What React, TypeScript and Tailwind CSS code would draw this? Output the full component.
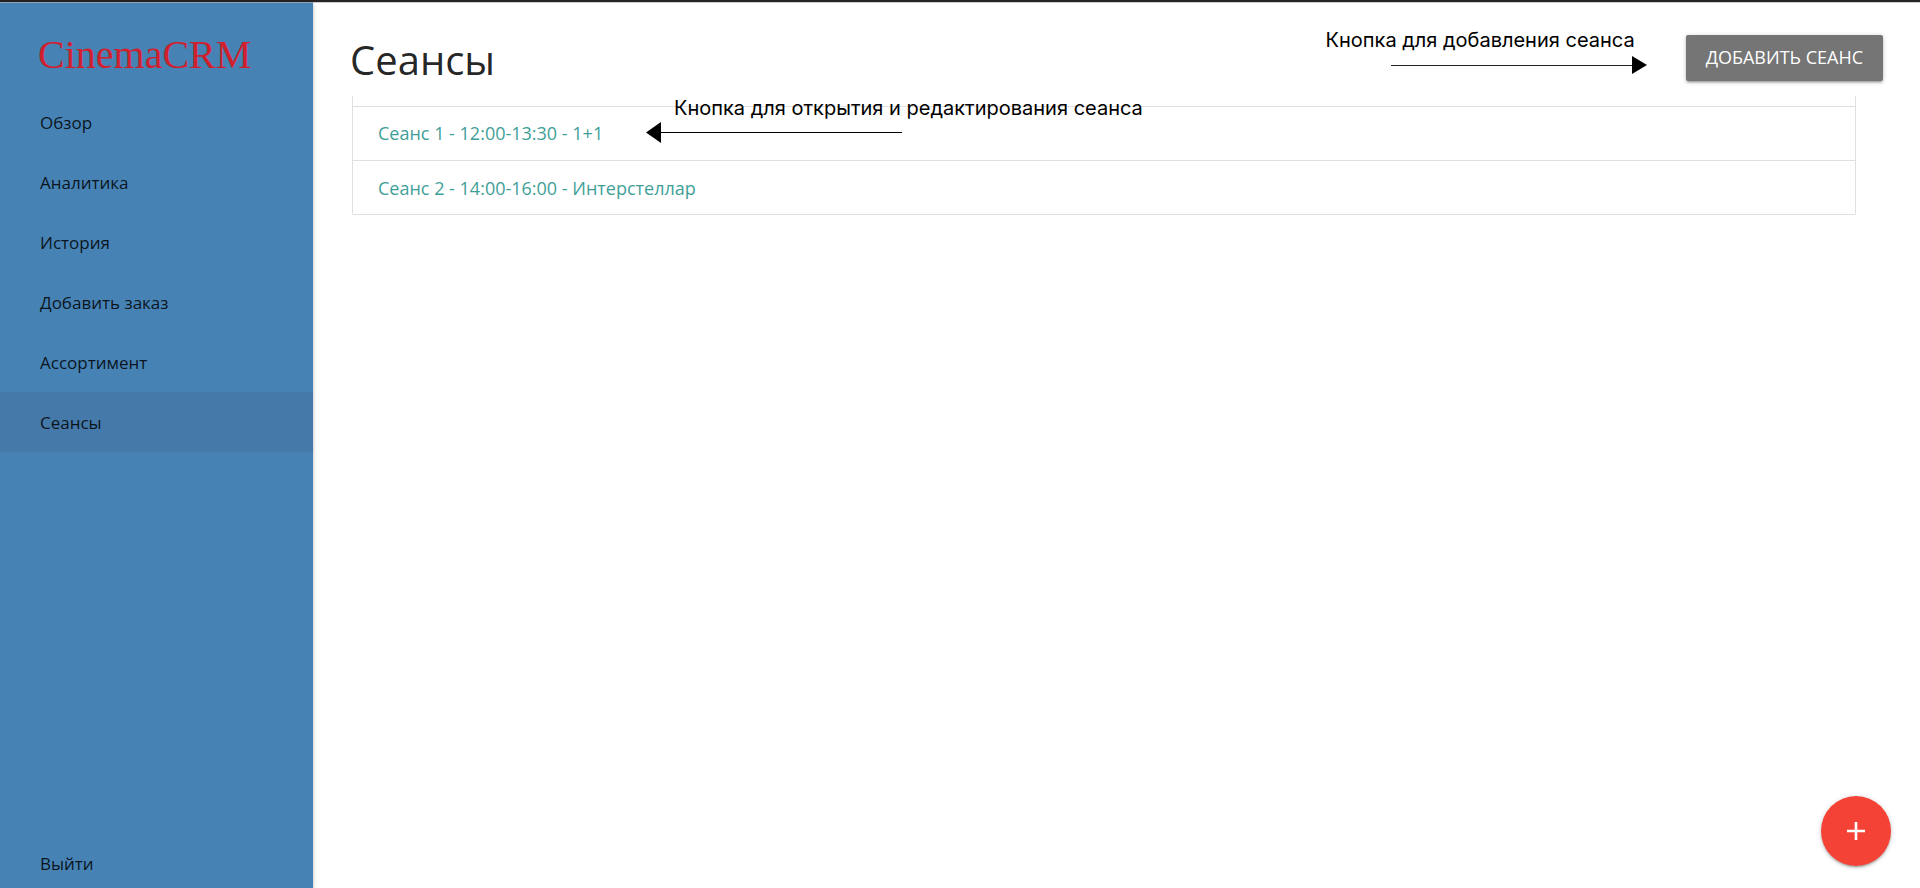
const navItems = [
  { label: 'Обзор', active: false },
  { label: 'Аналитика', active: false },
  { label: 'История', active: false },
  { label: 'Добавить заказ', active: false },
  { label: 'Ассортимент', active: false },
  { label: 'Сеансы', active: true },
];

function Sidebar() {
  return (
    <aside className="z-10 flex w-[313px] shrink-0 flex-col border-t border-[#8fa3b3] bg-[#4682b4] shadow-[0_2px_2px_0_rgba(0,0,0,0.14),0_3px_1px_-2px_rgba(0,0,0,0.12),0_1px_5px_0_rgba(0,0,0,0.2)]">
      <a href="#" className="flex h-[89px] items-center px-[38px] pt-[14px] font-['Liberation_Serif',serif] text-[40px] leading-none text-[#d0202e]">
        CinemaCRM
      </a>
      <nav className="flex grow flex-col text-[17px] font-medium text-black/85">
        {navItems.map((item) => (
          <a
            key={item.label}
            href="#"
            aria-current={item.active ? 'page' : undefined}
            className={`flex h-[60px] items-center px-10 pt-[2px] ${item.active ? 'bg-[#4479aa]' : ''}`}
          >
            {item.label}
          </a>
        ))}
        <a href="#" className="mt-auto flex h-12 items-center px-10">
          Выйти
        </a>
      </nav>
    </aside>
  );
}

function AddHint() {
  return (
    <div className="mr-[39px] flex flex-col items-end pt-[2px] font-['Inter',sans-serif] text-[20px] leading-6 text-black">
      <span className="mr-3">Кнопка для добавления сеанса</span>
      <svg className="mt-1 h-[18px] w-[256px]" viewBox="0 0 256 18" aria-hidden="true">
        <path d="M0 9.5H243" stroke="#222" strokeWidth="1" />
        <path d="M241 0L256 9L241 18Z" />
      </svg>
    </div>
  );
}

function EditHint() {
  return (
    <div className="absolute -top-[11px] left-[293px] font-['Inter',sans-serif] text-[20px] leading-6 text-black">
      <span className="ml-7 block whitespace-nowrap">Кнопка для открытия и редактирования сеанса</span>
      <svg className="mt-[2px] h-[22px] w-[256px]" viewBox="0 0 256 22" aria-hidden="true">
        <path d="M14 10.5H256" stroke="#000" strokeWidth="1" />
        <path d="M0 10.5L15 0V21Z" />
      </svg>
    </div>
  );
}

export default function App() {
  return (
    <div className="flex min-h-screen border-t-2 border-[#252323] bg-white font-['Open_Sans','Noto_Sans',sans-serif]">
      <Sidebar />
      <main className="flex min-w-0 grow flex-col border-t border-[#cccccc]">
        <header className="flex h-[93px] shrink-0 items-center pr-[37px] pl-[37px]">
          <h1 className="grow pt-5 text-[40px] leading-none text-black/87">Сеансы</h1>
          <AddHint />
          <button
            type="button"
            className="mt-4 h-[46px] rounded-[2px] bg-[#757575] px-5 text-[18px] text-white uppercase shadow-[0_2px_2px_0_rgba(0,0,0,0.14),0_3px_1px_-2px_rgba(0,0,0,0.12),0_1px_5px_0_rgba(0,0,0,0.2)]"
          >
            Добавить сеанс
          </button>
        </header>
        <ul className="mr-16 ml-[39px] rounded-b-[2px] border-x border-b border-[#e0e0e0] pt-[10px] text-[18px] text-[#3f9f98]">
          <li className="relative flex h-[54px] items-center border-t border-[#e0e0e0] px-[25px]">
            <a href="#">Сеанс 1 - 12:00-13:30 - 1+1</a>
            <EditHint />
          </li>
          <li className="flex h-[54px] items-center border-t border-[#e0e0e0] px-[25px] pt-px">
            <a href="#">Сеанс 2 - 14:00-16:00 - Интерстеллар</a>
          </li>
        </ul>
      </main>
      <button
        type="button"
        aria-label="Добавить"
        className="fixed right-[29px] bottom-[22px] flex size-[70px] items-center justify-center rounded-full bg-[#f44336] shadow-[0_2px_2px_0_rgba(0,0,0,0.14),0_3px_1px_-2px_rgba(0,0,0,0.12),0_1px_5px_0_rgba(0,0,0,0.2)]"
      >
        <svg className="size-[18px]" viewBox="0 0 18 18" fill="#fff" aria-hidden="true">
          <path d="M7.7 0H10.3V7.7H18V10.3H10.3V18H7.7V10.3H0V7.7H7.7Z" />
        </svg>
      </button>
    </div>
  );
}
